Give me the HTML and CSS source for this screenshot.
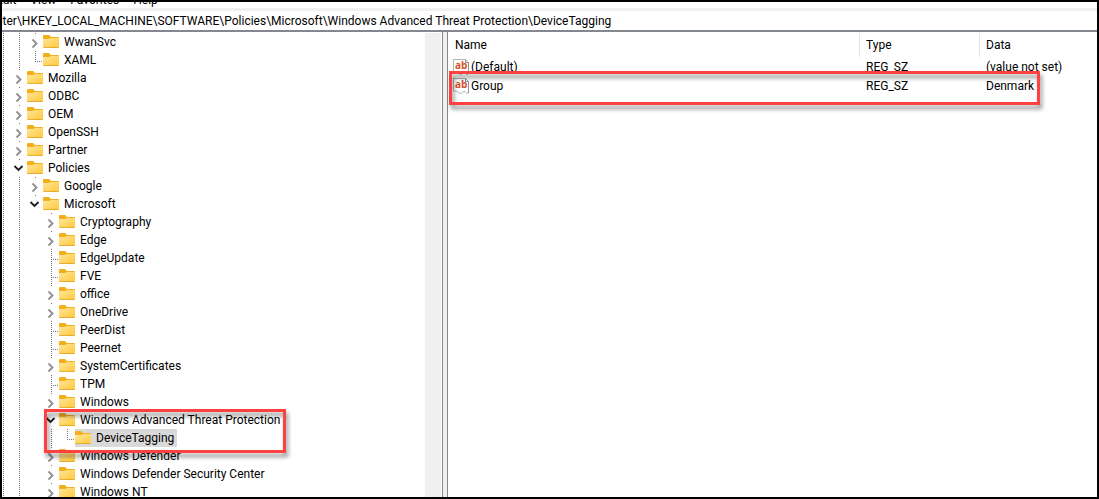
FILE: index.html
```html
<!DOCTYPE html>
<html lang="en">
<head>
    <meta charset="UTF-8">
    <meta name="viewport" content="width=device-width, initial-scale=1.0">
    <title>Registry Editor</title>
    <link rel="stylesheet" href="styles.css">
</head>
<body>
    <!-- shared icons -->
    <svg class="defs" width="0" height="0" aria-hidden="true">
        <defs>
            <linearGradient id="folder-fill" x1="0" y1="0" x2="1" y2="1">
                <stop offset="0" stop-color="#ffe59c"/>
                <stop offset="1" stop-color="#ffc937"/>
            </linearGradient>
            <symbol id="folder" viewBox="0 0 16 14">
                <path d="M0 1Q0 0 1 0H6L8 2H15Q16 2 16 3V6H0Z" fill="#f3b01a"/>
                <path d="M0 4H6L8 3H15.500Q16 3 16 3.500V12Q16 13 15 13H1Q0 13 0 12Z" fill="url(#folder-fill)"/>
                <path d="M0.500 12.500H15.500" stroke="#e9ab2c"/>
            </symbol>
            <symbol id="closed" viewBox="0 0 16 18">
                <path d="M5.500 6.500L9.500 10.500L5.500 14.500" fill="none" stroke="#919191" stroke-width="1.900"/>
            </symbol>
            <symbol id="open" viewBox="0 0 16 18">
                <path d="M3.500 7L7.500 11L11.500 7" fill="none" stroke="#1b1b1b" stroke-width="1.800"/>
            </symbol>
            <symbol id="string" viewBox="0 0 16 16">
                <path d="M0.500 0.500H12.500L15.500 3.500V15L13.500 15.500L12 13.500L10 13.500L8.500 15.500L6 15L4.500 13.500L3 13.500L0.500 12.500Z" fill="#fff" stroke="#b4b4b4"/>
                <path d="M12.500 0.500V3.500H15.500V15" fill="none" stroke="#8f8f8f"/>
                <text x="2" y="10" class="ab">ab</text>
            </symbol>
        </defs>
    </svg>

    <div class="window">
        <nav class="menu">
            <button>Edit</button>
            <button>View</button>
            <button>Favorites</button>
            <button>Help</button>
        </nav>

        <input class="address" type="text" aria-label="Address" spellcheck="false" value="Computer\HKEY_LOCAL_MACHINE\SOFTWARE\Policies\Microsoft\Windows Advanced Threat Protection\DeviceTagging">

        <main class="panes">
            <div class="tree-pane">
                <ul class="tree">
                    <li>
                        <ul>
                            <li><div class="row"><button class="expander" aria-label="Expand"><svg><use href="#closed"/></svg></button><span class="key"><svg class="folder"><use href="#folder"/></svg>WwanSvc</span></div></li>
                            <li><div class="row"><span class="leaf"></span><span class="key"><svg class="folder"><use href="#folder"/></svg>XAML</span></div></li>
                        </ul>
                    </li>
                    <li><div class="row"><button class="expander" aria-label="Expand"><svg><use href="#closed"/></svg></button><span class="key"><svg class="folder"><use href="#folder"/></svg>Mozilla</span></div></li>
                    <li><div class="row"><button class="expander" aria-label="Expand"><svg><use href="#closed"/></svg></button><span class="key"><svg class="folder"><use href="#folder"/></svg>ODBC</span></div></li>
                    <li><div class="row"><button class="expander" aria-label="Expand"><svg><use href="#closed"/></svg></button><span class="key"><svg class="folder"><use href="#folder"/></svg>OEM</span></div></li>
                    <li><div class="row"><button class="expander" aria-label="Expand"><svg><use href="#closed"/></svg></button><span class="key"><svg class="folder"><use href="#folder"/></svg>OpenSSH</span></div></li>
                    <li><div class="row"><button class="expander" aria-label="Expand"><svg><use href="#closed"/></svg></button><span class="key"><svg class="folder"><use href="#folder"/></svg>Partner</span></div></li>
                    <li class="continues">
                        <div class="row"><button class="expander" aria-label="Collapse"><svg><use href="#open"/></svg></button><span class="key"><svg class="folder"><use href="#folder"/></svg>Policies</span></div>
                        <ul>
                            <li><div class="row"><button class="expander" aria-label="Expand"><svg><use href="#closed"/></svg></button><span class="key"><svg class="folder"><use href="#folder"/></svg>Google</span></div></li>
                            <li>
                                <div class="row"><button class="expander" aria-label="Collapse"><svg><use href="#open"/></svg></button><span class="key"><svg class="folder"><use href="#folder"/></svg>Microsoft</span></div>
                                <ul>
                                    <li><div class="row"><button class="expander" aria-label="Expand"><svg><use href="#closed"/></svg></button><span class="key"><svg class="folder"><use href="#folder"/></svg>Cryptography</span></div></li>
                                    <li><div class="row"><button class="expander" aria-label="Expand"><svg><use href="#closed"/></svg></button><span class="key"><svg class="folder"><use href="#folder"/></svg>Edge</span></div></li>
                                    <li><div class="row"><span class="leaf"></span><span class="key"><svg class="folder"><use href="#folder"/></svg>EdgeUpdate</span></div></li>
                                    <li><div class="row"><span class="leaf"></span><span class="key"><svg class="folder"><use href="#folder"/></svg>FVE</span></div></li>
                                    <li><div class="row"><button class="expander" aria-label="Expand"><svg><use href="#closed"/></svg></button><span class="key"><svg class="folder"><use href="#folder"/></svg>office</span></div></li>
                                    <li><div class="row"><button class="expander" aria-label="Expand"><svg><use href="#closed"/></svg></button><span class="key"><svg class="folder"><use href="#folder"/></svg>OneDrive</span></div></li>
                                    <li><div class="row"><span class="leaf"></span><span class="key"><svg class="folder"><use href="#folder"/></svg>PeerDist</span></div></li>
                                    <li><div class="row"><span class="leaf"></span><span class="key"><svg class="folder"><use href="#folder"/></svg>Peernet</span></div></li>
                                    <li><div class="row"><button class="expander" aria-label="Expand"><svg><use href="#closed"/></svg></button><span class="key"><svg class="folder"><use href="#folder"/></svg>SystemCertificates</span></div></li>
                                    <li><div class="row"><span class="leaf"></span><span class="key"><svg class="folder"><use href="#folder"/></svg>TPM</span></div></li>
                                    <li><div class="row"><button class="expander" aria-label="Expand"><svg><use href="#closed"/></svg></button><span class="key"><svg class="folder"><use href="#folder"/></svg>Windows</span></div></li>
                                    <li class="marked">
                                        <div class="row"><button class="expander" aria-label="Collapse"><svg><use href="#open"/></svg></button><span class="key"><svg class="folder"><use href="#folder"/></svg>Windows Advanced Threat Protection</span></div>
                                        <ul>
                                            <li><div class="row"><span class="leaf"></span><span class="key selected"><svg class="folder"><use href="#folder"/></svg>DeviceTagging</span></div></li>
                                        </ul>
                                        <div class="highlight highlight-key"></div>
                                    </li>
                                    <li><div class="row"><button class="expander" aria-label="Expand"><svg><use href="#closed"/></svg></button><span class="key"><svg class="folder"><use href="#folder"/></svg>Windows Defender</span></div></li>
                                    <li><div class="row"><button class="expander" aria-label="Expand"><svg><use href="#closed"/></svg></button><span class="key"><svg class="folder"><use href="#folder"/></svg>Windows Defender Security Center</span></div></li>
                                    <li class="continues"><div class="row"><button class="expander" aria-label="Expand"><svg><use href="#closed"/></svg></button><span class="key"><svg class="folder"><use href="#folder"/></svg>Windows NT</span></div></li>
                                </ul>
                            </li>
                        </ul>
                    </li>
                </ul>
                <div class="scrollbar"></div>
            </div>

            <div class="splitter"></div>

            <div class="list-pane">
                <table class="values">
                    <thead>
                        <tr><th class="col-name">Name</th><th class="col-type">Type</th><th>Data</th></tr>
                    </thead>
                    <tbody>
                        <tr>
                            <td><span class="value-name"><svg class="string"><use href="#string"/></svg>(Default)</span></td>
                            <td>REG_SZ</td>
                            <td>(value not set)</td>
                        </tr>
                        <tr>
                            <td class="marked"><span class="value-name"><svg class="string"><use href="#string"/></svg>Group</span><div class="highlight highlight-value"></div></td>
                            <td>REG_SZ</td>
                            <td>Denmark</td>
                        </tr>
                    </tbody>
                </table>
            </div>
        </main>
    </div>
</body>
</html>
```
FILE: styles.css
```css
* {
    box-sizing: border-box;
}
body {
    margin: 0;
    background: #fff;
    color: #000;
    font-family: Roboto, "Open Sans", sans-serif;
    font-size: 12px;
    line-height: 18px;
}
button, input {
    font: inherit;
    color: inherit;
    border: none;
    background: none;
    padding: 0;
    margin: 0;
}
ul {
    list-style: none;
    margin: 0;
    padding: 0;
}
.defs {
    position: absolute;
}
.window {
    display: flex;
    flex-direction: column;
    height: 100vh;
    border: 2px solid #000;
    overflow: hidden;
}

/* menu and address bar */
.menu {
    display: flex;
    align-items: flex-end;
    gap: 14px;
    flex: none;
    height: 6px;
    margin-left: -6px;
    overflow: hidden;
}
.menu button {
    line-height: 16px;
}
.address {
    flex: none;
    width: 100%;
    height: 24px;
    border-top: 3px solid #f0f0f0;
    border-bottom: 2px solid #828790;
    text-indent: -38px;
    outline: none;
}

/* panes */
.panes {
    display: flex;
    flex: 1;
    min-height: 0;
}
.tree-pane {
    display: flex;
    flex: 0 0 440px;
    padding: 1px 1px 0 0;
    overflow: hidden;
}
.scrollbar {
    flex: none;
    width: 16px;
    background: #f0f0f0;
}
.splitter {
    flex: none;
    width: 6px;
    background: #f0f0f0;
    border-left: 1px solid #828790;
    border-right: 1px solid #828790;
}
.list-pane {
    flex: 1;
    padding-top: 1px;
}

/* tree */
.tree {
    flex: 1;
    padding-left: 9px;
}
.tree, .tree li {
    background-image: repeating-linear-gradient(#777 0 1px, transparent 1px 2px);
    background-repeat: no-repeat;
    background-size: 1px 100%;
    background-position: 8px 0;
}
.tree {
    background-position: 1px 0;
}
.tree ul {
    padding-left: 16px;
}
.tree li:last-child {
    background-size: 1px 11px;
}
.tree li.continues {
    background-size: 1px 100%;
}
.row {
    display: flex;
    height: 18px;
}
.expander, .leaf {
    flex: none;
    width: 16px;
    height: 18px;
}
.expander svg {
    display: block;
    width: 16px;
    height: 18px;
    background: linear-gradient(transparent 1px, #fff 1px);
}
.leaf {
    background: repeating-linear-gradient(90deg, #777 0 1px, transparent 1px 2px) 8px 10px / 8px 1px no-repeat;
}
.key {
    display: flex;
    align-items: center;
    gap: 5px;
    padding-right: 3px;
    white-space: nowrap;
}
.selected {
    background: #d9d9d9;
}
.folder {
    flex: none;
    width: 16px;
    height: 14px;
}

/* values */
.values {
    width: 100%;
    table-layout: fixed;
    border-collapse: separate;
    border-spacing: 0;
}
.values th {
    height: 24px;
    padding: 0 6px;
    border-right: 1px solid #e5e5e5;
    font-weight: normal;
    text-align: left;
}
.values th:last-child {
    border-right: none;
}
.values .col-name {
    width: 412px;
    padding-left: 7px;
}
.values .col-type {
    width: 120px;
}
.values td {
    height: 19px;
    padding: 0 6px;
    white-space: nowrap;
}
.values td:first-child {
    padding-left: 5px;
}
.value-name {
    display: flex;
    align-items: center;
    gap: 2px;
}
.string {
    width: 16px;
    height: 16px;
}
.ab {
    font: bold 10px "Open Sans", sans-serif;
    fill: #d64f2a;
}

/* red frames */
.marked {
    position: relative;
}
.highlight {
    position: absolute;
    left: 1px;
    border: 3px solid #fd4141;
    filter: drop-shadow(2px 4px 2px rgba(0, 0, 0, 0.45));
    pointer-events: none;
}
.highlight-key {
    top: -2px;
    width: 242px;
    height: 44px;
}
.highlight-value {
    top: -5px;
    width: 591px;
    height: 34px;
}
```
